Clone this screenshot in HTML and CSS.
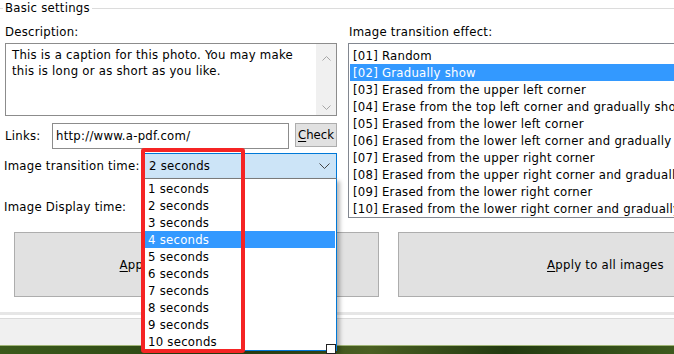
FILE: index.html
```html
<!DOCTYPE html>
<html lang="en">
<head>
<meta charset="utf-8">
<title>Basic settings</title>
<link rel="stylesheet" href="styles.css">
</head>
<body>
<div class="window">
  <div class="group">
    <div class="legend-row"><span class="legend">Basic settings</span></div>
    <div class="cols">
      <div class="left">
        <div class="label">Description:</div>
        <div class="memo">
          <div class="memo-text">This is a caption for this photo. You may make this is long or as short as you like.</div>
          <div class="vscroll">
            <svg class="arrow" width="9" height="5" viewBox="0 0 9 5"><polyline points="0.5,4.5 4.5,0.5 8.5,4.5" /></svg>
            <svg class="arrow" width="9" height="5" viewBox="0 0 9 5"><polyline points="0.5,0.5 4.5,4.5 8.5,0.5" /></svg>
          </div>
        </div>
        <div class="row links-row">
          <span class="row-label links-label">Links:</span>
          <div class="edit">http://www.a-pdf.com/</div>
          <button class="btn check-btn"><u>C</u>heck</button>
        </div>
        <div class="row combo-row">
          <span class="row-label">Image transition time:</span>
          <div class="combo combo-active">
            <span>2 seconds</span>
            <svg class="chevron" width="11" height="6" viewBox="0 0 11 6"><polyline points="0.5,0.5 5.5,5.5 10.5,0.5" /></svg>
            <div class="dropdown">
              <div class="item">1 seconds</div>
              <div class="item">2 seconds</div>
              <div class="item">3 seconds</div>
              <div class="item selected">4 seconds</div>
              <div class="item">5 seconds</div>
              <div class="item">6 seconds</div>
              <div class="item">7 seconds</div>
              <div class="item">8 seconds</div>
              <div class="item">9 seconds</div>
              <div class="item">10 seconds</div>
              <div class="grip"></div>
            </div>
            <div class="mark"></div>
          </div>
        </div>
        <div class="row display-row">
          <span class="row-label">Image Display time:</span>
          <div class="combo"><span>5 seconds</span></div>
        </div>
      </div>
      <div class="right">
        <div class="label right-label">Image transition effect:</div>
        <div class="listbox">
          <div class="item">[01] Random</div>
          <div class="item selected">[02] Gradually show</div>
          <div class="item">[03] Erased from the upper left corner</div>
          <div class="item">[04] Erase from the top left corner and gradually show</div>
          <div class="item">[05] Erased from the lower left corner</div>
          <div class="item">[06] Erased from the lower left corner and gradually show</div>
          <div class="item">[07] Erased from the upper right corner</div>
          <div class="item">[08] Erased from the upper right corner and gradually show</div>
          <div class="item">[09] Erased from the lower right corner</div>
          <div class="item">[10] Erased from the lower right corner and gradually show</div>
        </div>
      </div>
    </div>
    <div class="buttons">
      <button class="btn big-btn left-btn"><u>A</u>pply to selected images</button>
      <button class="btn big-btn right-btn"><u>A</u>pply to all images</button>
    </div>
  </div>
  <div class="separator"></div>
  <div class="statusbar"></div>
  <div class="desktop"></div>
</div>
</body>
</html>
```
FILE: styles.css
```css
* { box-sizing: border-box; }

html, body {
  margin: 0;
  padding: 0;
}

body {
  width: 674px;
  height: 354px;
  overflow: hidden;
  background: #ffffff;
  color: #000000;
  font-family: "DejaVu Sans Condensed", "DejaVu Sans", sans-serif;
  font-stretch: condensed;
  font-size: 13px;
  line-height: 16px;
  letter-spacing: 0.25px;
}

.window {
  display: flex;
  flex-direction: column;
  height: 354px;
  overflow: hidden;
}

/* group box */
.legend-row {
  display: flex;
  align-items: center;
  height: 16px;
}
.legend-row::before {
  content: "";
  width: 3px;
  border-top: 1px solid #dcdcdc;
}
.legend-row::after {
  content: "";
  flex: 1;
  border-top: 1px solid #dcdcdc;
}
.legend {
  padding: 0 2px;
  white-space: nowrap;
}

.cols {
  display: grid;
  grid-template-columns: 334px 1fr;
  column-gap: 9px;
  margin-top: 8px;
  margin-left: 5px;
}

.left, .right {
  display: flex;
  flex-direction: column;
  min-width: 0;
}

.label {
  height: 16px;
  white-space: nowrap;
}
.right-label { padding-left: 1px; }

/* description memo */
.memo {
  margin-top: 3px;
  width: 332px;
  height: 73px;
  border: 1px solid #8c8c8c;
  display: flex;
}
.memo-text {
  flex: 1;
  padding: 3px 0 3px 6px;
  line-height: 16px;
}
.vscroll {
  width: 20px;
  background: #f0f0f0;
  display: flex;
  flex-direction: column;
  justify-content: space-between;
  align-items: center;
  padding: 12px 0 5px;
}
.arrow polyline {
  fill: none;
  stroke: #a6a6a6;
  stroke-width: 1;
}

/* rows */
.row {
  display: flex;
  align-items: center;
  height: 26px;
}
.links-row { margin-top: 7px; }
.combo-row { margin-top: 4px; }
.display-row { margin-top: 15px; }

.row-label {
  width: 139px;
  margin-left: -1px;
  white-space: nowrap;
}
.links-label { width: 47px; margin-left: 0; }

.edit {
  width: 237px;
  height: 26px;
  border: 1px solid #8c8c8c;
  padding: 4px 3px;
  white-space: nowrap;
}

.btn {
  font: inherit;
  letter-spacing: inherit;
  color: #000;
  background: #e1e1e1;
  border: 1px solid #adadad;
  border-radius: 0;
  padding: 0;
  cursor: default;
}
.btn u { text-decoration-thickness: 1px; text-underline-offset: 2px; }

.check-btn {
  margin-left: 6px;
  width: 42px;
  height: 24px;
  margin-top: -2px;
  letter-spacing: 0;
}

/* combo box */
.combo {
  position: relative;
  width: 194px;
  height: 26px;
  border: 1px solid #7a7a7a;
  padding: 4px 5px;
  display: flex;
  align-items: center;
  justify-content: space-between;
  white-space: nowrap;
}
.combo-active {
  background: #cce4f7;
  border-color: #0078d7;
}
.chevron {
  margin-right: 1px;
}
.chevron polyline {
  fill: none;
  stroke: #444;
  stroke-width: 1;
}

.dropdown {
  position: absolute;
  top: 100%;
  left: -1px;
  width: 194px;
  background: #fff;
  border: 1px solid #0078d7;
  border-top-color: #7a7a7a;
  padding: 1px 1px 0;
  box-shadow: 3px 3px 4px rgba(0, 0, 0, 0.28);
  z-index: 5;
}

.item {
  height: 17px;
  line-height: 17px;
  padding-left: 3px;
  white-space: nowrap;
}
.item.selected {
  background: #3399ff;
  color: #fff;
}

.grip {
  position: absolute;
  right: 0;
  bottom: -4px;
  width: 10px;
  height: 10px;
  background: #fff;
  border: 1px solid #222;
}

.mark {
  position: absolute;
  top: -6px;
  left: -3px;
  width: 104px;
  height: 205px;
  border: 4px solid #f52424;
  border-radius: 3px;
  z-index: 6;
}

/* right list */
.listbox {
  margin-top: 3px;
  height: 175px;
  width: 360px;
  border: 1px solid #828790;
  padding: 3px 1px 0;
  overflow: hidden;
}

/* bottom buttons */
.buttons {
  display: flex;
  gap: 19px;
  margin-top: 12px;
  padding-left: 14px;
}
.big-btn {
  height: 65px;
  flex: none;
  white-space: nowrap;
  overflow: hidden;
}
.left-btn { width: 365px; }
.right-btn { width: 415px; }

.separator {
  margin-top: 15px;
  height: 3px;
  background: #e6e6e6;
}
.statusbar {
  margin-top: 3px;
  height: 27px;
  background: #f0f0f0;
  border-top: 1px solid #dadada;
}
.desktop {
  flex: 1;
  border-top: 1px solid #9fb476;
  background: linear-gradient(90deg, #3b5a1b 0%, #2a4512 30%, #4a5f22 55%, #233a10 75%, #3d5a1d 100%);
}
```
